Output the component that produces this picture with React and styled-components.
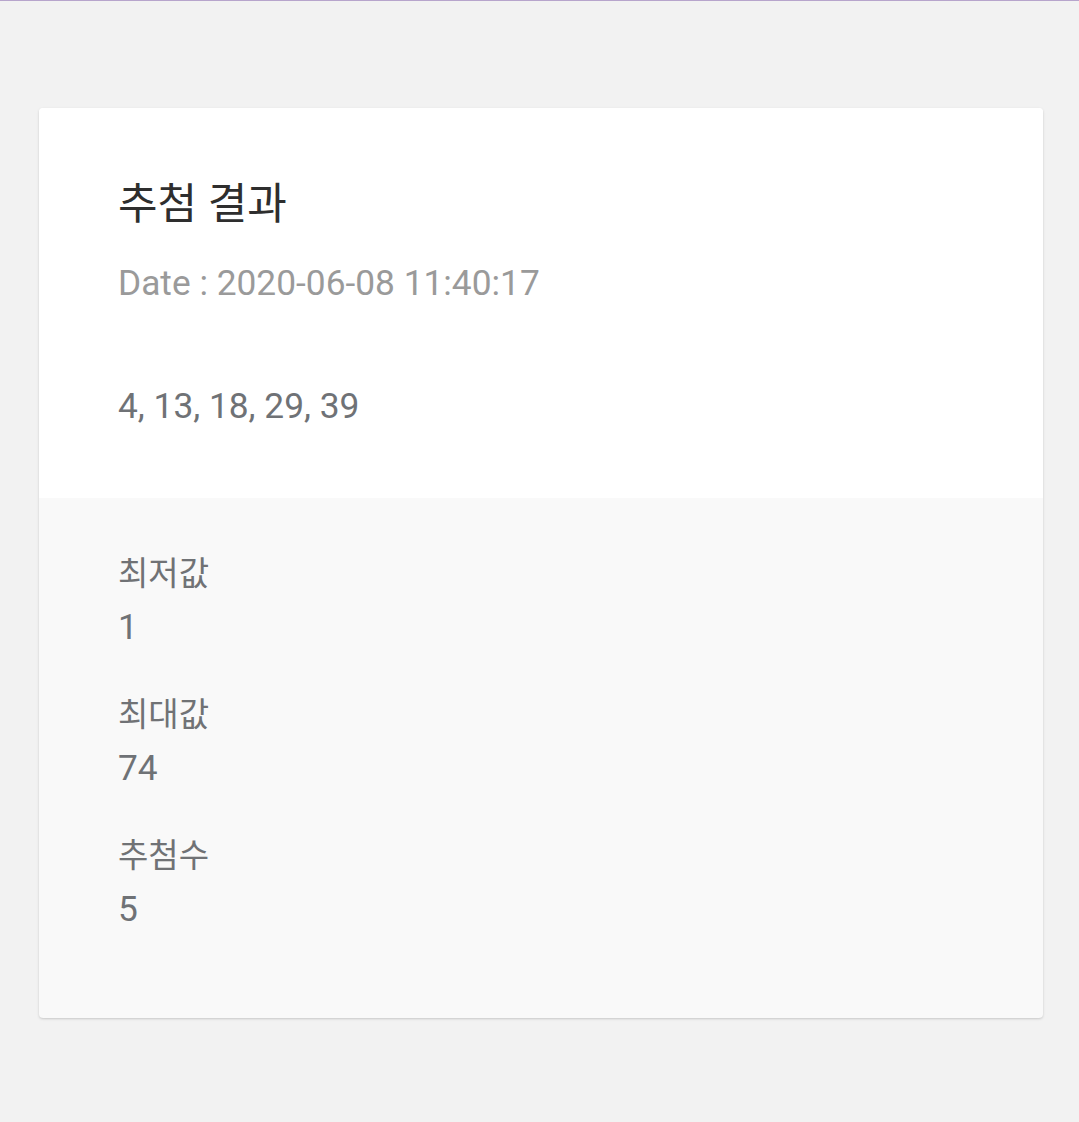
import React from 'react'
import styled, { createGlobalStyle } from 'styled-components';

const GlobalStyle = createGlobalStyle`
  html, body {
    margin: 0;
    padding: 0;
    background-color: #f2f2f2;
  }

  body {
    font-family: Roboto, "Noto Sans CJK KR", sans-serif;
    -webkit-font-smoothing: antialiased;
  }
`;

const Page = styled.div`
  min-height: 1122px;
  box-sizing: border-box;
  border-top: 1px solid #b7a5cc;
  padding: 107px 36px 0 39px;
`;

const Card = styled.section`
  width: 1004px;
  background-color: #f9f9f9;
  border-radius: 4px;
  overflow: hidden;
  box-shadow: 0 1px 3px rgba(0, 0, 0, 0.12), 0 1px 2px rgba(0, 0, 0, 0.06);
`;

const CardHeader = styled.header`
  height: 390px;
  box-sizing: border-box;
  padding: 68px 79px 0;
  background-color: #ffffff;
`;

const Title = styled.h1`
  margin: 0;
  font-size: 43px;
  line-height: 56px;
  font-weight: 400;
  color: #2e2e2e;
`;

const DateText = styled.div`
  margin-top: 27px;
  font-size: 35.3px;
  line-height: 48px;
  color: #9a9a9a;
`;

const Numbers = styled.div`
  margin-top: 75px;
  font-size: 35.3px;
  line-height: 48px;
  color: #6f7276;
`;

const CardBody = styled.div`
  display: flex;
  flex-direction: column;
  gap: 42px;
  padding: 54px 79px 85px;
`;

const Stat = styled.div`
  display: flex;
  flex-direction: column;
  gap: 7px;
`;

const StatLabel = styled.div`
  font-size: 33px;
  line-height: 44px;
  color: #707275;
`;

const StatValue = styled.div`
  font-size: 35.3px;
  line-height: 48px;
  color: #6f7276;
`;

const result = {
  title: '추첨 결과',
  date: '2020-06-08 11:40:17',
  numbers: [4, 13, 18, 29, 39],
  stats: [
    { label: '최저값', value: 1 },
    { label: '최대값', value: 74 },
    { label: '추첨수', value: 5 },
  ],
};

const App = () => {
  return (
    <>
      <GlobalStyle />
      <Page>
        <Card>
          <CardHeader>
            <Title>{result.title}</Title>
            <DateText>Date : {result.date}</DateText>
            <Numbers>{result.numbers.join(', ')}</Numbers>
          </CardHeader>
          <CardBody>
            {result.stats.map((stat) => (
              <Stat key={stat.label}>
                <StatLabel>{stat.label}</StatLabel>
                <StatValue>{stat.value}</StatValue>
              </Stat>
            ))}
          </CardBody>
        </Card>
      </Page>
    </>
  );
};

export default App;
